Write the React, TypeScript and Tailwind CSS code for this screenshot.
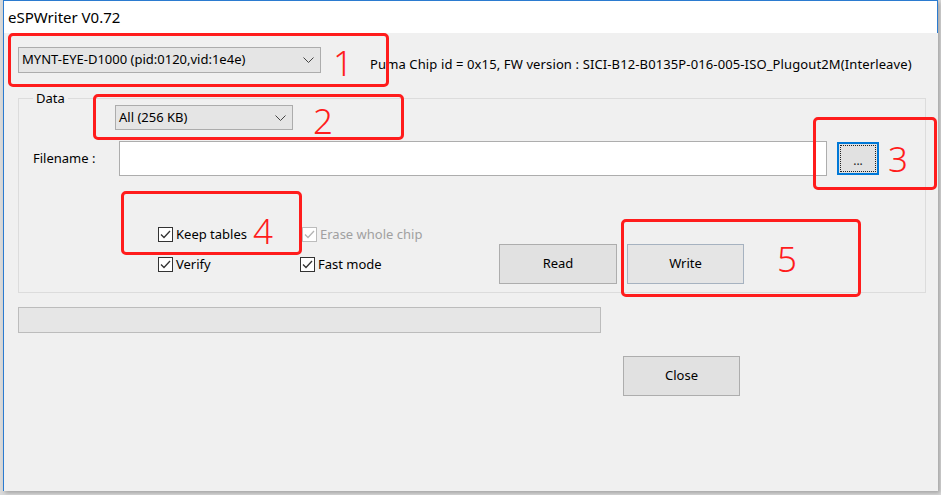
// eSPWriter dialog with red numbered callouts
const font = { fontFamily: '"Noto Sans", "Liberation Sans", sans-serif' };

function Chevron() {
  return (
    <svg width="11" height="6" viewBox="0 0 11 6" className="shrink-0">
      <polyline points="0.5,0.5 5.5,5.5 10.5,0.5" fill="none" stroke="#444" strokeWidth="1" />
    </svg>
  );
}

function Combo({ label, className }: { label: string; className: string }) {
  return (
    <div className={`flex items-center justify-between pl-[3px] pr-[6px] bg-[#e5e5e5] border border-[#acacac] text-[13px] text-black ${className}`}>
      <span>{label}</span>
      <Chevron />
    </div>
  );
}

function Check({ label, disabled }: { label: string; disabled?: boolean }) {
  const c = disabled ? '#b4b4b4' : '#333333';
  return (
    <div className="flex items-center h-[16px]">
      <div className={`w-[15px] h-[15px] border bg-white flex items-center justify-center ${disabled ? 'border-[#bcbcbc]' : 'border-[#333]'}`}>
        <svg width="11" height="9" viewBox="0 0 11 9">
          <polyline points="1,4.5 4,7.5 10,1" fill="none" stroke={c} strokeWidth="1.3" />
        </svg>
      </div>
      <span className={`ml-[3px] text-[13px] leading-[16px] ${disabled ? 'text-[#a0a0a0]' : 'text-black'}`}>{label}</span>
    </div>
  );
}

function Btn({ label, className }: { label: string; className?: string }) {
  return (
    <div className={`flex items-center justify-center bg-[#e1e1e1] border text-[13px] text-black ${className ?? 'border-[#adadad]'}`}>
      {label}
    </div>
  );
}

function Callout({ box, num, numPos }: { box: string; num: string; numPos: string }) {
  return (
    <>
      <div className={`absolute border-[3px] border-[#ff1c1c] rounded-[5px] ${box}`} />
      <div className={`absolute text-[35px] leading-none font-light text-[#ff1c1c] ${numPos}`}>{num}</div>
    </>
  );
}

export default function App() {
  return (
    <div className="relative w-[941px] h-[495px] bg-[#dadada] overflow-hidden" style={font}>
      <div className="ml-[3px] w-[935px] h-[491px] flex flex-col border-l border-[#2b7bd0] shadow-[2px_2px_4px_rgba(0,0,0,0.25)]">
        {/* title bar */}
        <div className="h-[33px] bg-white border-t border-r border-[#2b7bd0] flex items-center pl-[4px] pr-[1px]">
          <span className="text-[15px] text-black">eSPWriter V0.72</span>
        </div>

        {/* body */}
        <div className="flex-1 bg-[#f0f0f0] pl-[14px] flex flex-col">
          <div className="flex items-start mt-[14px]">
            <Combo label="MYNT-EYE-D1000 (pid:0120,vid:1e4e)" className="w-[303px] h-[26px]" />
            <span className="ml-[49px] mt-[10px] text-[13px] leading-[14px] tracking-[0.12px] text-black whitespace-nowrap">
              Puma Chip id = 0x15, FW version : SICI-B12-B0135P-016-005-ISO_Plugout2M(Interleave)
            </span>
          </div>

          <fieldset className="mt-[18px] w-[908px] h-[202px] border border-[#dcdcdc] flex flex-col">
            <legend className="ml-[14px] px-[3px] text-[13px] leading-[14px] text-black">Data</legend>
            <Combo label="All (256 KB)" className="ml-[96px] w-[178px] h-[25px]" />

            <div className="flex items-center mt-[11px] pl-[14px]">
              <span className="w-[86px] text-[13px] text-black">Filename :</span>
              <div className="w-[708px] h-[35px] bg-white border border-[#adadad]" />
              <div className="ml-[10px] w-[42px] h-[33px] bg-[#e1e1e1] border-2 border-[#0078d7] p-[1px]">
                <div className="w-full h-full border border-dotted border-[#222] flex items-end justify-center pb-[4px] text-[12px] leading-none text-[#222]">
                  ...
                </div>
              </div>
            </div>

            <div className="flex items-start mt-[50px] ml-[139px]">
              <div className="grid grid-cols-[142px_199px] gap-y-[14px]">
                <Check label="Keep tables" />
                <div className="pl-[2px]">
                  <Check label="Erase whole chip" disabled />
                </div>
                <Check label="Verify" />
                <Check label="Fast mode" />
              </div>
              <div className="flex gap-[10px] mt-[18px]">
                <Btn label="Read" className="w-[118px] h-[40px] border-[#adadad]" />
                <Btn label="Write" className="w-[117px] h-[40px] border-[#a6b2c0] bg-[#e5e5e5]" />
              </div>
            </div>
          </fieldset>

          <div className="mt-[14px] w-[583px] h-[26px] bg-[#e6e6e6] border border-[#bcbcbc]" />

          <div className="mt-[23px] ml-[605px]">
            <Btn label="Close" className="w-[117px] h-[40px] border-[#adadad]" />
          </div>
        </div>
      </div>

      {/* annotations */}
      <Callout box="left-[8px] top-[33px] w-[381px] h-[54px]" num="1" numPos="left-[333px] top-[45px]" />
      <Callout box="left-[93px] top-[94px] w-[311px] h-[46px]" num="2" numPos="left-[313px] top-[103px]" />
      <Callout box="left-[813px] top-[117px] w-[124px] h-[73px]" num="3" numPos="left-[888px] top-[141px]" />
      <Callout box="left-[121px] top-[191px] w-[181px] h-[64px]" num="4" numPos="left-[253px] top-[213px]" />
      <Callout box="left-[621px] top-[219px] w-[240px] h-[78px]" num="5" numPos="left-[777px] top-[241px]" />
    </div>
  );
}
